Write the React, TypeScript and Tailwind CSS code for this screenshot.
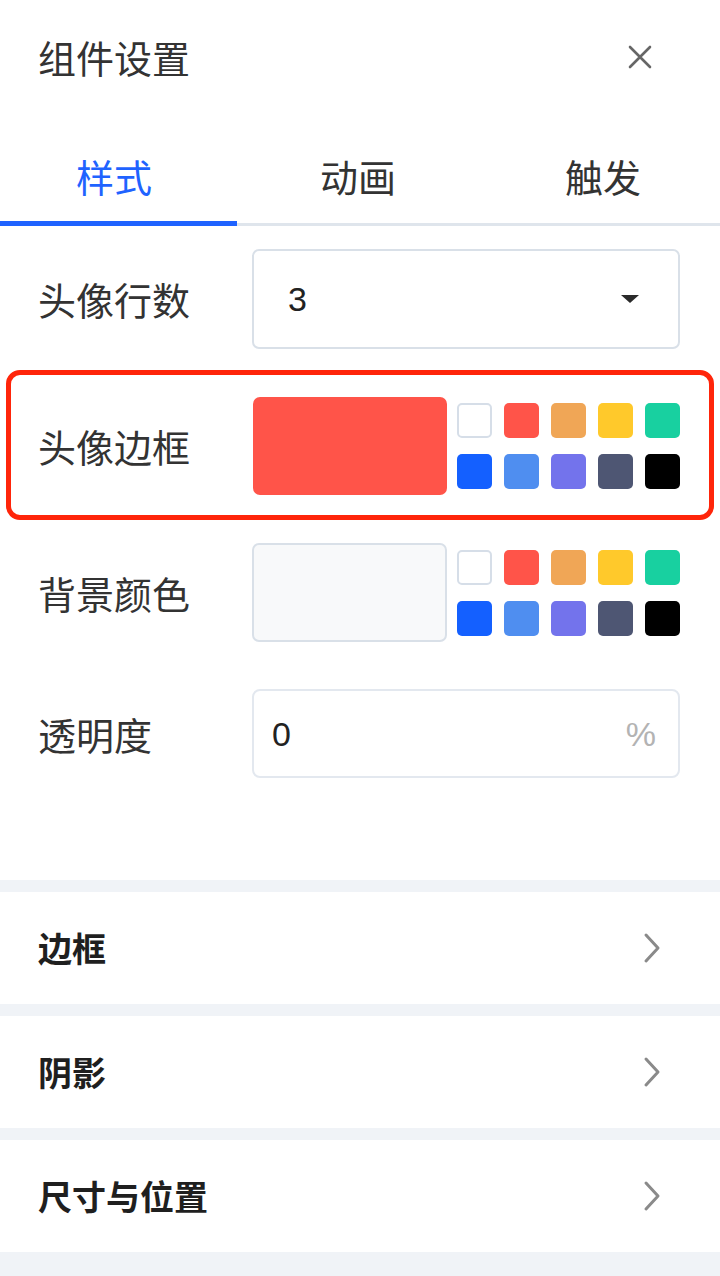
import React from "react";

const FONT = { fontFamily: '"Noto Sans CJK SC", "Noto Sans", sans-serif' };

const swatches = [
  "bg-white border-2 border-[#d6dee8]",
  "bg-[#ff5449]",
  "bg-[#f0a656]",
  "bg-[#ffc92b]",
  "bg-[#18d0a0]",
  "bg-[#1460ff]",
  "bg-[#4f8ef0]",
  "bg-[#7373ec]",
  "bg-[#4e5673]",
  "bg-black",
];

function SwatchGrid() {
  return (
    <div className="grid grid-cols-[repeat(5,35px)] gap-x-[12px] gap-y-[16px] ml-[10px]">
      {swatches.map((c, i) => (
        <div key={i} className={`w-[35px] h-[35px] rounded-[5px] ${c}`} />
      ))}
    </div>
  );
}

function Label({ children }: { children: React.ReactNode }) {
  return <div className="w-[214px] shrink-0 text-[38px] text-[#333] leading-none">{children}</div>;
}

function Chevron() {
  return (
    <svg width="20" height="32" viewBox="0 0 20 32" fill="none" className="text-[#8a8a8a]">
      <path d="M4 3 L16 16 L4 29" stroke="currentColor" strokeWidth="3" strokeLinecap="round" strokeLinejoin="round" />
    </svg>
  );
}

function SectionRow({ title }: { title: string }) {
  return (
    <div className="h-[112px] bg-white flex items-center justify-between pl-[38px] pr-[58px]">
      <span className="text-[34px] font-semibold text-[#1f1f1f] leading-none">{title}</span>
      <Chevron />
    </div>
  );
}

export default function App() {
  const tabs = [
    { t: "样式", pad: "pr-[12px]" },
    { t: "动画", pad: "pr-[4px]" },
    { t: "触发", pad: "pl-[6px]" },
  ];
  return (
    <div className="w-[720px] h-[1276px] bg-[#f0f3f7] flex flex-col overflow-hidden" style={FONT}>
      <div className="bg-white">
        {/* header */}
        <div className="h-[114px] flex items-center justify-between pl-[38px] pr-[68px]">
          <span className="text-[38px] text-[#333] leading-none">组件设置</span>
          <svg width="24" height="24" viewBox="0 0 24 24" fill="none">
            <path d="M2 2 L22 22 M22 2 L2 22" stroke="#666" strokeWidth="2.6" strokeLinecap="round" />
          </svg>
        </div>

        {/* tabs */}
        <div className="flex h-[112px] border-b-[3px] border-[#dfe5ec]">
          {tabs.map((tab, i) => (
            <div key={tab.t} className={`w-[240px] shrink-0 relative flex items-center justify-center pt-[14px] ${tab.pad}`}>
              <span className={`text-[38px] leading-none ${i === 0 ? "text-[#1f63ff]" : "text-[#333]"}`}>{tab.t}</span>
              {i === 0 && <div className="absolute left-0 w-[237px] bottom-[-3px] h-[5px] bg-[#1f63ff]" />}
            </div>
          ))}
        </div>

        {/* form */}
        <div className="pt-[23px] pb-[102px]">
          <div className="flex items-center pl-[38px] pr-[40px]">
            <Label>头像行数</Label>
            <div className="flex-1 h-[100px] border-2 border-[#d9e0e8] rounded-[7px] flex items-center justify-between pl-[34px] pr-[38px]">
              <span className="text-[34px] text-[#222] leading-none" style={{ fontFamily: '"Liberation Sans", sans-serif' }}>3</span>
              <svg width="20" height="10" viewBox="0 0 20 10">
                <path d="M1 1 H19 L10 9 Z" fill="#2a2a2a" />
              </svg>
            </div>
          </div>

          <div className="mt-[21px] mx-[6px] border-[5px] border-[#ff250a] rounded-[14px] flex items-center pl-[27px] pr-[25px] pt-[22px] pb-[20px]">
            <div className="w-[215px] shrink-0 text-[38px] text-[#333] leading-none">头像边框</div>
            <div className="w-[194px] h-[98px] rounded-[7px] bg-[#ff5449]" />
            <SwatchGrid />
          </div>

          <div className="mt-[23px] flex items-center pl-[38px] pr-[40px]">
            <Label>背景颜色</Label>
            <div className="w-[196px] h-[99px] rounded-[7px] bg-[#f8f9fa] border-2 border-[#d9e0e8]" />
            <SwatchGrid />
          </div>

          <div className="mt-[47px] flex items-center pl-[38px] pr-[40px]">
            <Label>透明度</Label>
            <div className="flex-1 h-[89px] border-2 border-[#e3e8ef] rounded-[8px] flex items-center justify-between pl-[18px] pr-[22px]" style={{ fontFamily: '"Liberation Sans", sans-serif' }}>
              <span className="text-[34px] text-[#222] leading-none">0</span>
              <span className="text-[34px] text-[#b3b3b3] leading-none">%</span>
            </div>
          </div>
        </div>
      </div>

      <div className="mt-[12px] flex flex-col gap-[12px]">
        <SectionRow title="边框" />
        <SectionRow title="阴影" />
        <SectionRow title="尺寸与位置" />
      </div>
    </div>
  );
}
